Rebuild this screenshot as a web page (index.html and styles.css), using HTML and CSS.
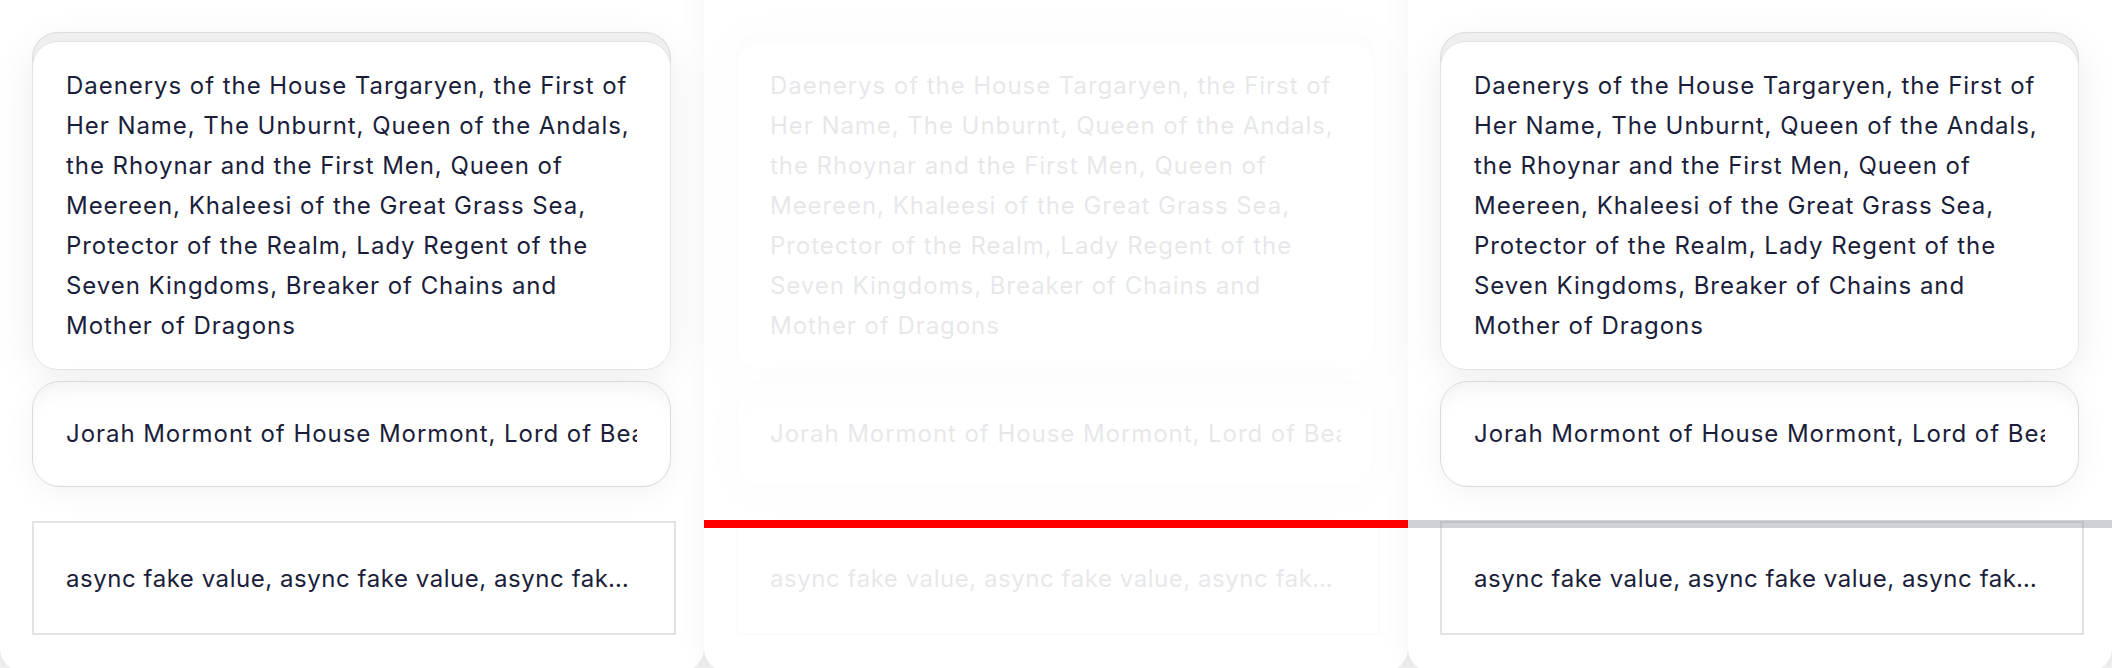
FILE: index.html
```html
<!DOCTYPE html>
<html lang="en">
<head>
<meta charset="utf-8">
<title>Stories</title>
<link rel="stylesheet" href="styles.css">
</head>
<body>
<main class="stories">
  <section class="panel">
    <div class="stack">
      <div class="card card-multi">Daenerys of the House Targaryen, the First of Her Name, The Unburnt, Queen of the Andals, the Rhoynar and the First Men, Queen of Meereen, Khaleesi of the Great Grass Sea, Protector of the Realm, Lady Regent of the Seven Kingdoms, Breaker of Chains and Mother of Dragons</div>
      <div class="card card-single"><span class="clip">Jorah Mormont of House Mormont, Lord of Bear Island, Knight of the Kingsguard</span></div>
      <div class="box-wrap">
        <div class="box">async fake value, async fake value, async fake value, async fake value</div>
      </div>
    </div>
  </section>
  <section class="panel">
    <div class="stack faded">
      <div class="card card-multi">Daenerys of the House Targaryen, the First of Her Name, The Unburnt, Queen of the Andals, the Rhoynar and the First Men, Queen of Meereen, Khaleesi of the Great Grass Sea, Protector of the Realm, Lady Regent of the Seven Kingdoms, Breaker of Chains and Mother of Dragons</div>
      <div class="card card-single"><span class="clip">Jorah Mormont of House Mormont, Lord of Bear Island, Knight of the Kingsguard</span></div>
      <div class="box-wrap">
        <div class="box">async fake value, async fake value, async fake value, async fake value</div>
      </div>
    </div>
    <div class="bar bar-red"></div>
  </section>
  <section class="panel">
    <div class="stack">
      <div class="card card-multi">Daenerys of the House Targaryen, the First of Her Name, The Unburnt, Queen of the Andals, the Rhoynar and the First Men, Queen of Meereen, Khaleesi of the Great Grass Sea, Protector of the Realm, Lady Regent of the Seven Kingdoms, Breaker of Chains and Mother of Dragons</div>
      <div class="card card-single"><span class="clip">Jorah Mormont of House Mormont, Lord of Bear Island, Knight of the Kingsguard</span></div>
      <div class="box-wrap">
        <div class="box">async fake value, async fake value, async fake value, async fake value</div>
      </div>
    </div>
    <div class="bar bar-gray"></div>
  </section>
</main>
</body>
</html>
```
FILE: styles.css
```css
* { box-sizing: border-box; }
html, body { margin: 0; padding: 0; }
body {
  background: #f1f1f2;
  font-family: Inter, "Noto Sans", sans-serif;
  color: #1b1e3b;
  overflow: hidden;
  width: 2112px;
  height: 668px;
}
.stories {
  display: grid;
  grid-template-columns: repeat(3, 704px);
  margin-top: -40px;
}
.panel {
  position: relative;
  height: 712px;
  background: #fff;
  border-radius: 24px;
  box-shadow: 0 0 28px rgba(0, 0, 0, 0.05);
  padding: 81px 28px 0 32px;
}
.stack {
  display: flex;
  flex-direction: column;
}
.faded { opacity: 0.1; }
.card {
  background: #fff;
  border: 1px solid #e4e4e6;
  font-size: 24px;
  line-height: 40px;
  letter-spacing: 0.95px;
  margin-right: 5px;
}
.card-multi {
  border-radius: 26px;
  padding: 24px 32px 23px 33px;
  box-shadow:
    0 -9px 0 -1px #efeff0,
    0 -9px 0 0 #dcdcde,
    0 4px 40px rgba(0, 0, 0, 0.08);
}
.card-single {
  margin-top: 11px;
  border-radius: 28px;
  border-color: #dadadd;
  padding: 32px 33px 32px 33px;
  box-shadow:
    inset 0 16px 20px -10px rgba(0, 0, 0, 0.06),
    0 6px 30px rgba(0, 0, 0, 0.05);
}
.clip {
  display: block;
  white-space: nowrap;
  overflow: hidden;
}
.box-wrap {
  margin-top: 34px;
}
.box {
  border: 2px solid #e3e3e5;
  background: #fff;
  font-size: 24px;
  line-height: 40px;
  letter-spacing: 0.55px;
  padding: 36px 34px 34px 32px;
  white-space: nowrap;
  overflow: hidden;
  text-overflow: ellipsis;
}
.bar {
  position: absolute;
  left: 0;
  right: 0;
  top: 560px;
  height: 8px;
}
.bar-red { background: #ff0000; }
.bar-gray { background: rgba(150, 152, 164, 0.45); }
```
